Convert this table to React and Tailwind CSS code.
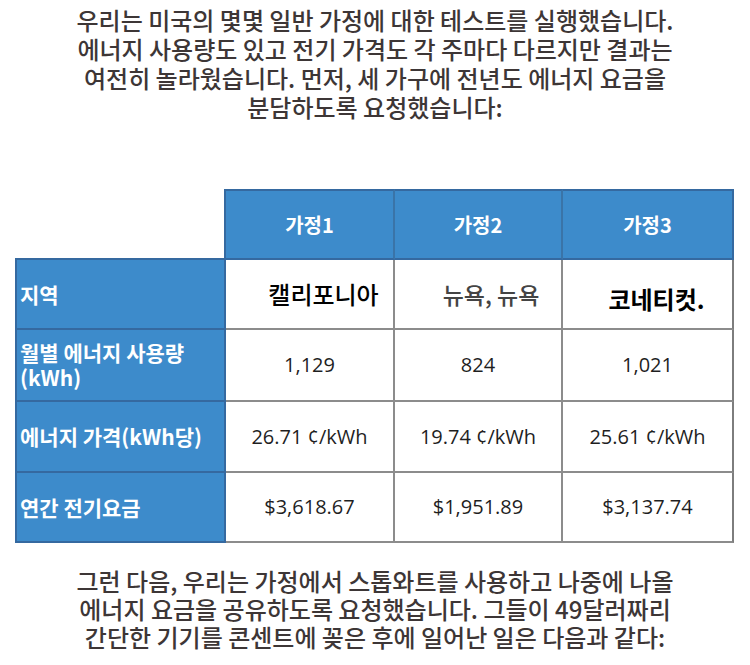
const kr = { fontFamily: '"Noto Sans CJK KR", "Noto Sans", sans-serif' };
const latin = { fontFamily: '"Open Sans", "Noto Sans CJK KR", sans-serif' };

const rows = [
  {
    label: ['지역'],
    cells: [
      { text: '캘리포니아', cls: 'pl-[28px] text-[24px] font-medium text-black', style: kr },
      { text: '뉴욕, 뉴욕', cls: 'pl-[26px] text-[23px] font-medium text-[#444]', style: kr },
      { text: '코네티컷.', cls: 'pl-[18px] pt-[10px] text-[24px] font-bold text-black', style: kr },
    ],
    h: 'h-[70px]',
  },
  {
    label: ['월별 에너지 사용량', '(kWh)'],
    cells: ['1,129', '824', '1,021'],
    h: 'h-[72px]',
  },
  {
    label: ['에너지 가격(kWh당)'],
    cells: ['26.71 ¢/kWh', '19.74 ¢/kWh', '25.61 ¢/kWh'],
    h: 'h-[71px]',
  },
  {
    label: ['연간 전기요금'],
    cells: ['$3,618.67', '$1,951.89', '$3,137.74'],
    h: 'h-[70px]',
  },
];

const topLines = [
  '우리는 미국의 몇몇 일반 가정에 대한 테스트를 실행했습니다.',
  '에너지 사용량도 있고 전기 가격도 각 주마다 다르지만 결과는',
  '여전히 놀라웠습니다. 먼저, 세 가구에 전년도 에너지 요금을',
  '분담하도록 요청했습니다:',
];

const bottomLines = [
  '그런 다음, 우리는 가정에서 스톱와트를 사용하고 나중에 나올',
  '에너지 요금을 공유하도록 요청했습니다. 그들이 49달러짜리',
  '간단한 기기를 콘센트에 꽂은 후에 일어난 일은 다음과 같다:',
];

function Cell({ cell }) {
  if (typeof cell === 'string') {
    return (
      <div className="flex items-center justify-center text-[20px] text-[#1f1f1f]" style={latin}>
        {cell}
      </div>
    );
  }
  return (
    <div className={`flex items-center justify-center ${cell.cls}`} style={cell.style}>
      {cell.text}
    </div>
  );
}

export default function App() {
  return (
    <div className="w-[750px] h-[665px] bg-white overflow-hidden" style={kr}>
      <div className="pt-[5px] flex flex-col items-center text-[24px] font-medium text-[#3d3636]">
        {topLines.map((l) => (
          <div key={l} className="h-[29px] leading-[29px] whitespace-nowrap">
            {l}
          </div>
        ))}
      </div>

      <div className="mt-[68px] ml-[15px] grid grid-cols-[211px_169px_168px_171px]">
        {/* header row */}
        <div className="h-[71px] border-b-2 border-r-2 border-[#3569a0]" />
        {['가정1', '가정2', '가정3'].map((h, i) => (
          <div
            key={h}
            className={`h-[71px] flex items-center justify-center bg-[#3d8bcb] border-t-2 border-b-2 border-r-2 border-[#3569a0] text-white text-[20px] font-bold ${
              i < 2 ? 'border-r-[#3a74a8]' : ''
            }`}
          >
            {h}
          </div>
        ))}

        {rows.map((r, ri) => (
          <div key={ri} className="contents">
            <div
              className={`${r.h} flex flex-col justify-center bg-[#3d8bcb] border-l-2 border-r-2 border-b-2 border-[#3569a0] pl-[3px] text-white text-[21px] font-bold leading-[25px]`}
            >
              {r.label.map((l) => (
                <span key={l} className="whitespace-nowrap">{l}</span>
              ))}
            </div>
            {r.cells.map((c, ci) => (
              <div
                key={ci}
                className={`${r.h} grid border-b-2 border-r-2 border-[#8c8c8c] ${
                  ci < 2 ? '' : 'border-r-[#7d7d7d]'
                }`}
              >
                <Cell cell={c} />
              </div>
            ))}
          </div>
        ))}
      </div>

      <div className="mt-[24px] flex flex-col items-center text-[24px] font-medium text-[#3d3636]">
        {bottomLines.map((l) => (
          <div key={l} className="h-[28px] leading-[28px] whitespace-nowrap">
            {l}
          </div>
        ))}
      </div>
    </div>
  );
}
